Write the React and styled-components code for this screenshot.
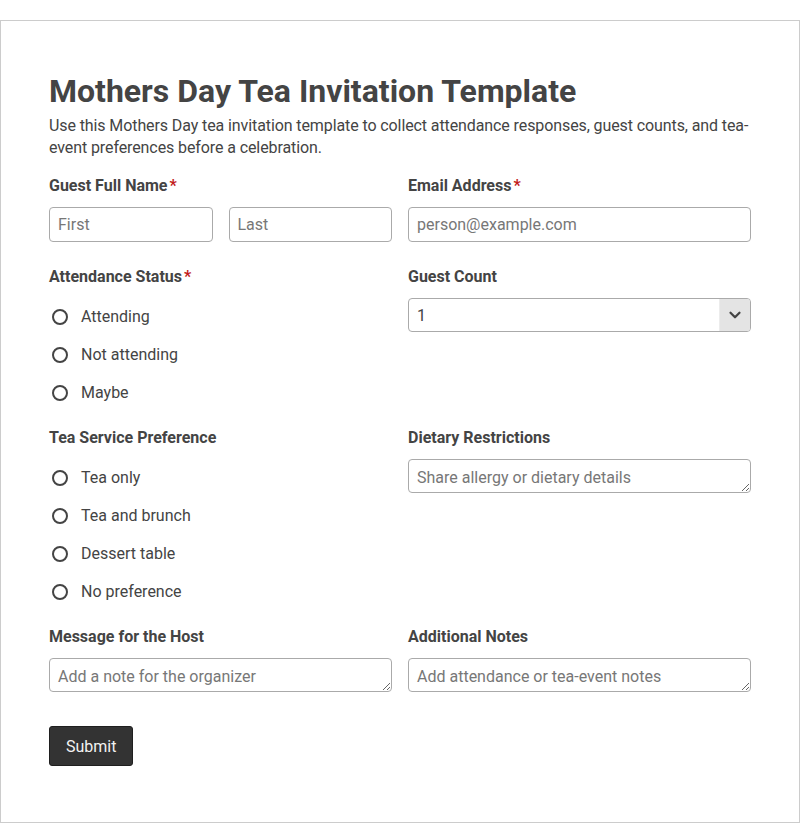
import React from "react";
import styled, { createGlobalStyle } from "styled-components";
import { ChevronDown } from "lucide-react";

const Global = createGlobalStyle`
  html, body { margin: 0; padding: 0; background: #fff; }
  body { font-family: Roboto, "Liberation Sans", sans-serif; color: #444; }
  * { box-sizing: border-box; }
`;

const Form = styled.form`
  width: 800px;
  margin-top: 20px;
  border: 1px solid #ccc;
  padding: 48px 48px 48px;
  background: #fff;
`;

const Title = styled.h1`
  margin: 0 0 2px;
  font-size: 32px;
  line-height: 44px;
  font-weight: 700;
  color: #444;
`;

const Description = styled.p`
  margin: 0 0 16px;
  font-size: 16px;
  line-height: 22px;
  letter-spacing: -0.1px;
  color: #444;
`;

const Grid = styled.div`
  display: grid;
  grid-template-columns: 1fr 1fr;
  column-gap: 16px;
  row-gap: 24px;
`;

const Field = styled.div`
  display: flex;
  flex-direction: column;
  min-width: 0;
`;

const Label = styled.label`
  display: block;
  font-size: 16px;
  line-height: 22px;
  font-weight: 700;
  color: #444;
  margin-bottom: 10px;
`;

const Req = styled.span`
  color: #c21b1b;
  margin-left: 2px;
`;

const Pair = styled.div`
  display: grid;
  grid-template-columns: 1fr 1fr;
  gap: 16px;
`;

const inputBase = `
  width: 100%;
  border: 1px solid #aaa;
  border-radius: 4px;
  font-family: Roboto, "Liberation Sans", sans-serif;
  font-size: 16px;
  color: #444;
  background: #fff;
  &::placeholder { color: #777; opacity: 1; }
`;

const Input = styled.input`
  ${inputBase}
  height: 35px;
  padding: 0 8px;
`;

const TextArea = styled.textarea`
  ${inputBase}
  display: block;
  height: 34px;
  padding: 8px 8px 4px;
  line-height: 20px;
  resize: vertical;
`;

const SelectWrap = styled.div`
  position: relative;
  height: 34px;
`;

const Select = styled.select`
  ${inputBase}
  height: 34px;
  appearance: none;
  -webkit-appearance: none;
  padding: 0 40px 0 8px;
`;

const ArrowBox = styled.span`
  position: absolute;
  top: 1px;
  right: 1px;
  bottom: 1px;
  width: 31px;
  background: #e4e4e4;
  border-left: 1px solid #ececec;
  border-radius: 0 3px 3px 0;
  display: flex;
  align-items: center;
  justify-content: center;
  pointer-events: none;
  color: #444;
`;

const RadioGroup = styled.div`
  display: flex;
  flex-direction: column;
  gap: 19px;
  padding: 9px 0 1px;
`;

const RadioRow = styled.label`
  display: flex;
  align-items: center;
  gap: 13px;
  font-size: 16px;
  line-height: 19px;
  color: #444;
  padding-left: 3px;
`;

const Radio = styled.input.attrs({ type: "radio" })`
  appearance: none;
  -webkit-appearance: none;
  width: 16px;
  height: 16px;
  margin: 0;
  border: 2px solid #444;
  border-radius: 50%;
  background: #fff;
  flex: none;
`;

const Actions = styled.div`
  margin-top: 34px;
  padding-bottom: 8px;
`;

const Submit = styled.button`
  height: 40px;
  padding: 0 16px;
  background: #333;
  color: #f2f2f2;
  border: 1px solid #1f1f1f;
  border-radius: 3px;
  font-family: Roboto, "Liberation Sans", sans-serif;
  font-size: 16px;
`;

function RadioField({ name, label, required, options }) {
  return (
    <Field>
      <Label as="div">
        {label}
        {required && <Req>*</Req>}
      </Label>
      <RadioGroup>
        {options.map((o) => (
          <RadioRow key={o}>
            <Radio name={name} value={o} />
            {o}
          </RadioRow>
        ))}
      </RadioGroup>
    </Field>
  );
}

export default function App() {
  return (
    <>
      <Global />
      <Form onSubmit={(e) => e.preventDefault()}>
        <Title>Mothers Day Tea Invitation Template</Title>
        <Description>
          Use this Mothers Day tea invitation template to collect attendance
          responses, guest counts, and tea-event preferences before a
          celebration.
        </Description>
        <Grid>
          <Field>
            <Label>
              Guest Full Name<Req>*</Req>
            </Label>
            <Pair>
              <Input placeholder="First" />
              <Input placeholder="Last" />
            </Pair>
          </Field>
          <Field>
            <Label>
              Email Address<Req>*</Req>
            </Label>
            <Input placeholder="person@example.com" />
          </Field>

          <RadioField
            name="attendance"
            label="Attendance Status"
            required
            options={["Attending", "Not attending", "Maybe"]}
          />
          <Field>
            <Label>Guest Count</Label>
            <SelectWrap>
              <Select defaultValue="1">
                <option>1</option>
                <option>2</option>
                <option>3</option>
                <option>4</option>
              </Select>
              <ArrowBox>
                <ChevronDown size={18} strokeWidth={3} />
              </ArrowBox>
            </SelectWrap>
          </Field>

          <RadioField
            name="tea"
            label="Tea Service Preference"
            options={["Tea only", "Tea and brunch", "Dessert table", "No preference"]}
          />
          <Field>
            <Label>Dietary Restrictions</Label>
            <TextArea rows={1} placeholder="Share allergy or dietary details" />
          </Field>

          <Field>
            <Label>Message for the Host</Label>
            <TextArea rows={1} placeholder="Add a note for the organizer" />
          </Field>
          <Field>
            <Label>Additional Notes</Label>
            <TextArea rows={1} placeholder="Add attendance or tea-event notes" />
          </Field>
        </Grid>
        <Actions>
          <Submit type="submit">Submit</Submit>
        </Actions>
      </Form>
    </>
  );
}
